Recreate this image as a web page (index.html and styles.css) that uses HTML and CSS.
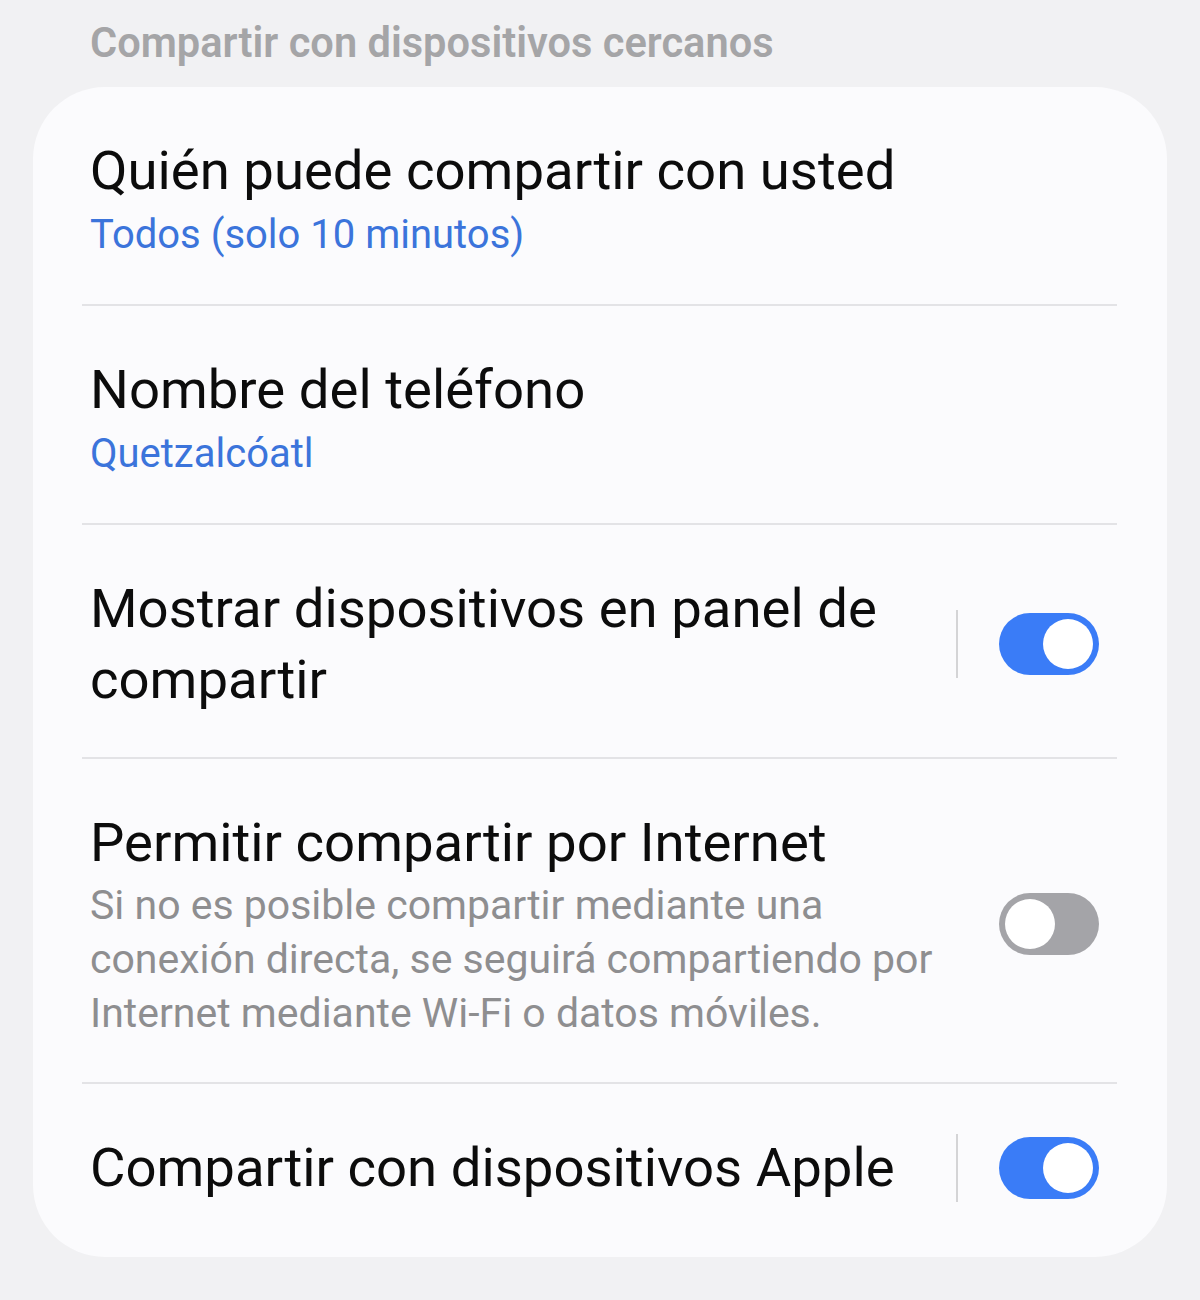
FILE: index.html
```html
<!DOCTYPE html>
<html lang="es">
<head>
  <meta charset="UTF-8" />
  <title>Compartir con dispositivos cercanos</title>
  <link rel="stylesheet" href="styles.css">
</head>
<body>
  <div class="screen">
    <h2 class="group-title">Compartir con dispositivos cercanos</h2>

    <div class="card">
      <!-- Who can share -->
      <div class="row">
        <div class="text">
          <div class="title">Quién puede compartir con usted</div>
          <div class="value">Todos (solo 10 minutos)</div>
        </div>
      </div>
      <div class="divider"></div>

      <!-- Phone name -->
      <div class="row">
        <div class="text">
          <div class="title">Nombre del teléfono</div>
          <div class="value">Quetzalcóatl</div>
        </div>
      </div>
      <div class="divider"></div>

      <!-- Show devices -->
      <div class="row tall">
        <div class="text">
          <div class="title">Mostrar dispositivos en panel de compartir</div>
        </div>
        <div class="actions">
          <span class="sep"></span>
          <span class="switch on"><span class="knob"></span></span>
        </div>
      </div>
      <div class="divider"></div>

      <!-- Internet sharing -->
      <div class="row tall">
        <div class="text">
          <div class="title">Permitir compartir por Internet</div>
          <div class="desc">Si no es posible compartir mediante una conexión directa, se seguirá compartiendo por Internet mediante Wi-Fi o datos móviles.</div>
        </div>
        <div class="actions">
          <span class="switch"><span class="knob"></span></span>
        </div>
      </div>
      <div class="divider"></div>

      <!-- Apple devices -->
      <div class="row last">
        <div class="text">
          <div class="title">Compartir con dispositivos Apple</div>
        </div>
        <div class="actions">
          <span class="sep"></span>
          <span class="switch on"><span class="knob"></span></span>
        </div>
      </div>
    </div>
  </div>
</body>
</html>
```

FILE: styles.css
```css
body {
  margin: 0;
  padding: 0;
  background: #f1f1f3;
  font-family: Roboto, "Noto Sans", sans-serif;
  color: #0c0c0c;
}
.screen {
  width: 1200px;
  height: 1300px;
  padding: 0 33px;
  box-sizing: border-box;
}
.group-title {
  margin: 0;
  padding: 19px 0 0 57px;
  height: 87px;
  box-sizing: border-box;
  font-size: 41.6px;
  line-height: 48px;
  font-weight: 600;
  color: #a5a5a7;
}
.card {
  background: #fbfbfd;
  border-radius: 72px;
  overflow: hidden;
}
.row {
  display: flex;
  align-items: center;
  padding: 48px 68px 40px 57px;
}
.row.tall {
  padding-bottom: 42px;
}
.row.last {
  padding-bottom: 54px;
}
.text {
  flex: 1;
  min-width: 0;
}
.title {
  font-size: 54.5px;
  line-height: 71px;
}
.value {
  font-size: 40px;
  line-height: 58px;
  color: #3b74db;
}
.desc {
  font-size: 41px;
  line-height: 54px;
  color: #8e8e90;
}
.divider {
  height: 2px;
  background: #e3e3e6;
  margin: 0 50px 0 49px;
}
.actions {
  width: 154px;
  display: flex;
  align-items: center;
  justify-content: flex-end;
  gap: 41px;
}
.sep {
  width: 2px;
  height: 68px;
  background: #d4d4d6;
}
.switch {
  width: 100px;
  height: 62px;
  border-radius: 31px;
  background: #a4a4a8;
  display: flex;
  align-items: center;
  padding: 0 6px;
  box-sizing: border-box;
}
.switch .knob {
  width: 50px;
  height: 50px;
  border-radius: 50%;
  background: #fff;
}
.switch.on {
  background: #3a7cf7;
  justify-content: flex-end;
}
```
